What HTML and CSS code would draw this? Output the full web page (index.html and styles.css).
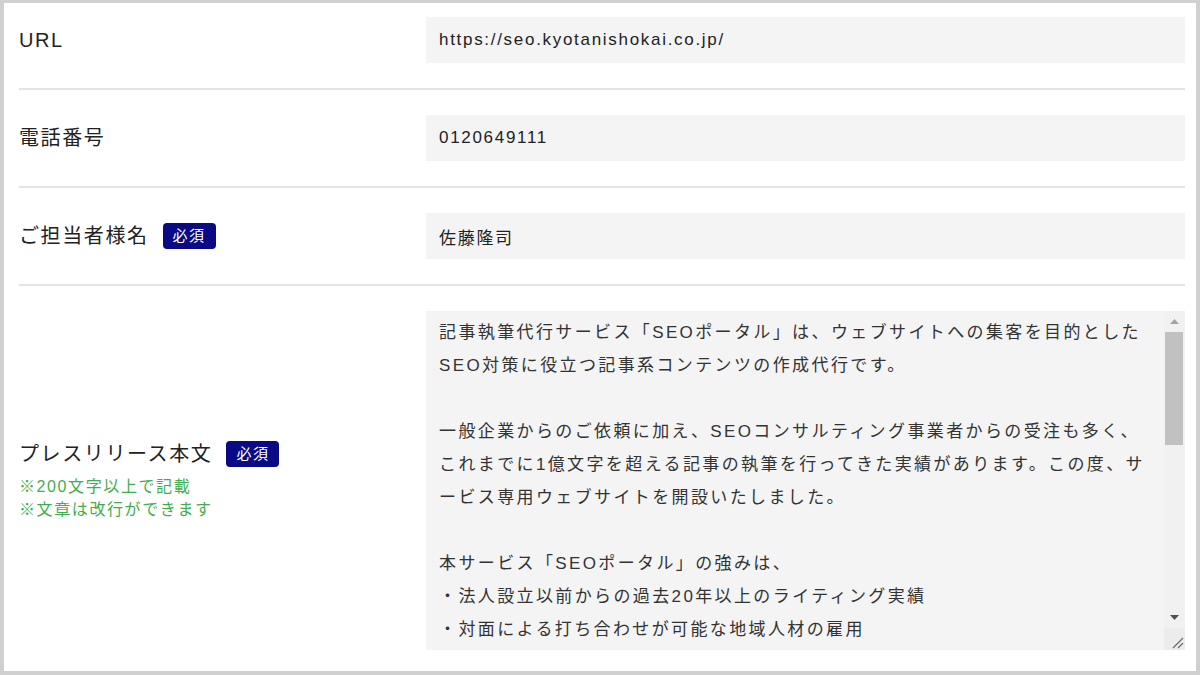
FILE: index.html
```
<!DOCTYPE html>
<html lang="ja">
<head>
    <meta charset="UTF-8">
    <meta name="viewport" content="width=device-width, initial-scale=1.0">
    <title>プレスリリース登録</title>
    <link rel="stylesheet" href="styles.css">
</head>
<body>
    <div class="page">
        <form class="entry-form">
            <div class="form-row first">
                <div class="label-cell">
                    <span class="label">URL</span>
                </div>
                <div class="field-cell">
                    <input class="field" type="text" value="https://seo.kyotanishokai.co.jp/">
                </div>
            </div>

            <div class="form-row">
                <div class="label-cell">
                    <span class="label">電話番号</span>
                </div>
                <div class="field-cell">
                    <input class="field" type="text" value="0120649111">
                </div>
            </div>

            <div class="form-row">
                <div class="label-cell">
                    <span class="label">ご担当者様名</span>
                    <span class="required">必須</span>
                </div>
                <div class="field-cell">
                    <input class="field" type="text" value="佐藤隆司">
                </div>
            </div>

            <div class="form-row">
                <div class="label-cell stacked">
                    <div>
                        <span class="label">プレスリリース本文</span>
                        <span class="required">必須</span>
                    </div>
                    <p class="note">※200文字以上で記載<br>※文章は改行ができます</p>
                </div>
                <div class="field-cell textarea-wrap">
                    <textarea class="field body-text">記事執筆代行サービス「SEOポータル」は、ウェブサイトへの集客を目的とした
SEO対策に役立つ記事系コンテンツの作成代行です。

一般企業からのご依頼に加え、SEOコンサルティング事業者からの受注も多く、
これまでに1億文字を超える記事の執筆を行ってきた実績があります。この度、サ
ービス専用ウェブサイトを開設いたしました。

本サービス「SEOポータル」の強みは、
・法人設立以前からの過去20年以上のライティング実績
・対面による打ち合わせが可能な地域人材の雇用
・専門知識を持つライターによる高品質な記事の作成
・企画から構成、執筆、校正までの一貫した対応
の3点です。

記事の納品後も、修正のご依頼には柔軟に対応しております。
ウェブサイトの集客にお悩みの企業様は、お気軽にご相談ください。

【会社概要】
会社名：株式会社京谷商会
所在地：京都府
事業内容：記事執筆代行、SEOコンサルティング
URL：https://seo.kyotanishokai.co.jp/

【お問い合わせ先】
電話番号：0120649111
担当：佐藤隆司</textarea>
                    <!-- スクロールバー (表示用) -->
                    <div class="scrollbar" aria-hidden="true">
                        <div class="sb-button">
                            <svg width="9" height="5" viewBox="0 0 9 5"><polygon points="4.5,0 9,5 0,5" fill="#a3a3a3"/></svg>
                        </div>
                        <div class="sb-track">
                            <div class="sb-thumb"></div>
                        </div>
                        <div class="sb-button">
                            <svg width="9" height="5" viewBox="0 0 9 5"><polygon points="0,0 9,0 4.5,5" fill="#505050"/></svg>
                        </div>
                        <div class="sb-resizer">
                            <svg width="21" height="22" viewBox="0 0 21 22">
                                <line x1="19" y1="10" x2="9" y2="20" stroke="#6e6e6e" stroke-width="1.2"/>
                                <line x1="19" y1="15" x2="14" y2="20" stroke="#6e6e6e" stroke-width="1.2"/>
                            </svg>
                        </div>
                    </div>
                </div>
            </div>
        </form>
    </div>
</body>
</html>
```

FILE: styles.css
```
html, body {
    margin: 0;
    padding: 0;
    background-color: #fff;
}

.page {
    box-sizing: border-box;
    height: 675px;
    overflow: hidden;
    border: 4px solid #d0d0d0;
    border-top-width: 3px;
    background-color: #fff;
    font-family: "Liberation Sans", "Noto Sans CJK JP", sans-serif;
    color: #222;
}

.entry-form {
    margin: 0 11px 0 15px;
}

.form-row {
    display: grid;
    grid-template-columns: 407px 1fr;
    align-items: center;
    padding: 25px 0;
    border-bottom: 2px solid #e4e4e4;
}

.form-row.first {
    padding-top: 14px;
}

.label-cell {
    display: flex;
    align-items: center;
}

.label-cell.stacked {
    flex-direction: column;
    align-items: flex-start;
}

.label-cell.stacked > div {
    display: flex;
    align-items: center;
}

.label {
    font-size: 20px;
    line-height: 28px;
    letter-spacing: 0.08em;
    color: #222;
}

.required {
    display: inline-block;
    margin-left: 14px;
    padding: 0 10px;
    height: 26px;
    line-height: 26px;
    border-radius: 4px;
    background-color: #0a0a84;
    color: #fff;
    font-size: 15px;
    letter-spacing: 0.1em;
}

.note {
    margin: 7px 0 0;
    font-size: 16px;
    line-height: 23px;
    letter-spacing: 0.1em;
    color: #3fae4c;
}

.field {
    display: block;
    box-sizing: border-box;
    width: 100%;
    height: 46px;
    margin: 0;
    padding: 0 13px;
    border: none;
    outline: none;
    background-color: #f4f4f4;
    font-family: "Liberation Sans", "Noto Sans CJK JP", sans-serif;
    font-size: 17px;
    letter-spacing: 0.1em;
    color: #222;
}

.textarea-wrap {
    position: relative;
}

.body-text {
    height: 339px;
    padding: 5px 23px 5px 13px;
    line-height: 33px;
    letter-spacing: 0.14em;
    color: #333;
    resize: none;
    overflow: hidden;
}

/* スクロールバー */
.scrollbar {
    position: absolute;
    top: 0;
    right: 0;
    bottom: 0;
    width: 21px;
    display: flex;
    flex-direction: column;
    background-color: #f1f1f1;
}

.sb-button {
    height: 21px;
    display: flex;
    align-items: center;
    justify-content: center;
}

.sb-track {
    flex: 1;
}

.sb-thumb {
    height: 113px;
    margin: 0 2px 0 1px;
    background-color: #c1c1c1;
}

.sb-resizer {
    height: 22px;
    background-color: #ececec;
}

.sb-resizer svg {
    display: block;
}
```
